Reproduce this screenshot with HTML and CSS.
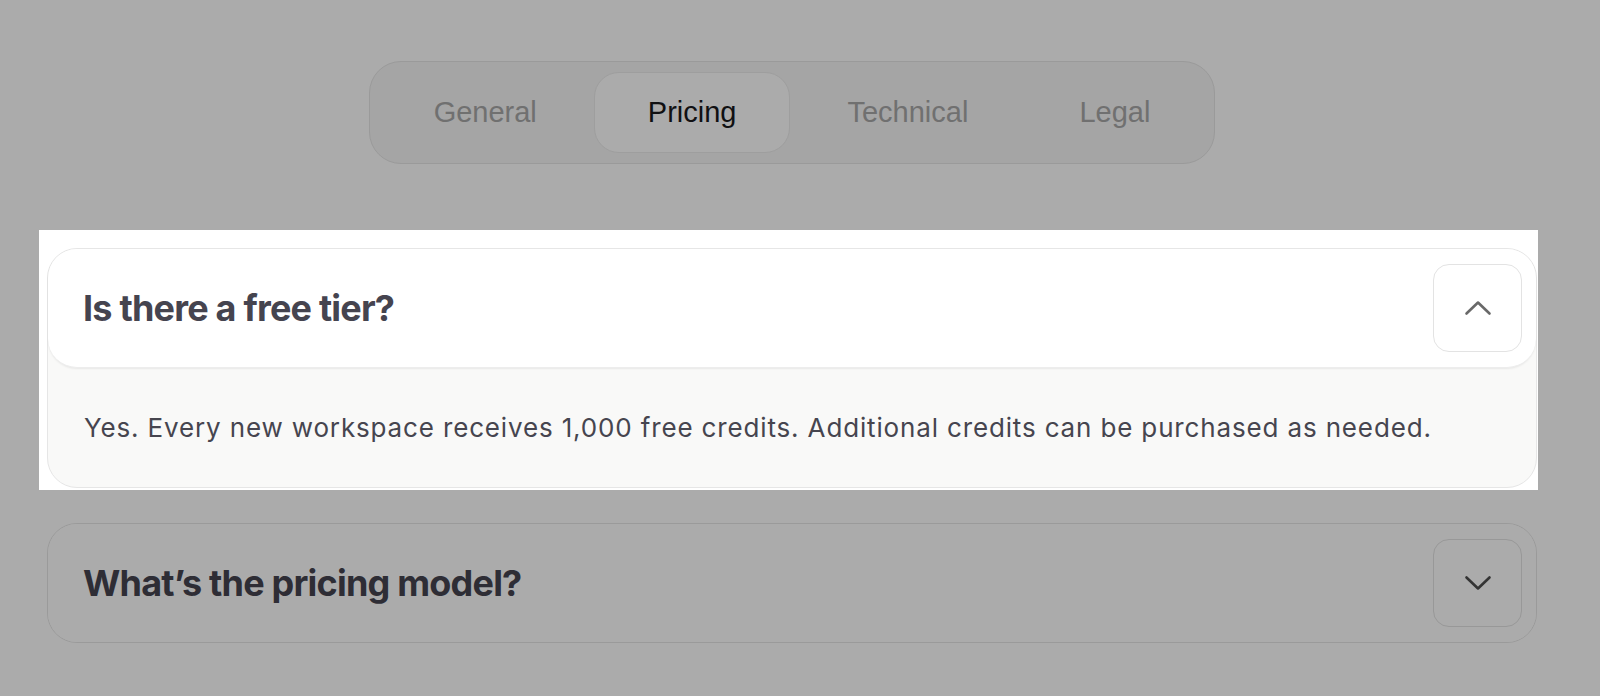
FILE: index.html
```html
<!DOCTYPE html>
<html lang="en">
<head>
<meta charset="utf-8">
<title>FAQ</title>
<link rel="stylesheet" href="styles.css">
</head>
<body>
<div class="page">
  <div class="tabs-row">
    <nav class="tabs">
      <button class="tab">General</button>
      <button class="tab active">Pricing</button>
      <button class="tab">Technical</button>
      <button class="tab">Legal</button>
    </nav>
  </div>

  <section class="faq">
    <div class="item open">
      <div class="item-head">
        <h3 class="q">Is there a free tier?</h3>
        <button class="toggle" aria-label="Collapse">
          <svg width="28" height="16" viewBox="0 0 28 16"><polyline points="2.5,13.5 14,2.5 25.5,13.5" fill="none" stroke="#696969" stroke-width="2.6" stroke-linecap="round" stroke-linejoin="round"/></svg>
        </button>
      </div>
      <div class="item-body">
        <p class="a">Yes. Every new workspace receives 1,000 free credits. Additional credits can be purchased as needed.</p>
      </div>
    </div>

    <div class="item">
      <div class="item-head">
        <h3 class="q">What’s the pricing model?</h3>
        <button class="toggle" aria-label="Expand">
          <svg width="28" height="16" viewBox="0 0 28 16"><polyline points="2.5,2.5 14,13.5 25.5,2.5" fill="none" stroke="#4e4e4e" stroke-width="2.6" stroke-linecap="round" stroke-linejoin="round"/></svg>
        </button>
      </div>
    </div>
  </section>
</div>
<div class="spotlight"></div>
</body>
</html>
```
FILE: styles.css
```css
* { box-sizing: border-box; }
html, body { margin: 0; padding: 0; }
body {
  background: #ffffff;
  font-family: Inter, "Liberation Sans", sans-serif;
  width: 1600px;
  height: 696px;
  overflow: hidden;
  position: relative;
}
.page {
  padding: 61px 63px 0 47px;
}
.tabs-row {
  display: flex;
  justify-content: center;
}
.tabs {
  display: flex;
  gap: 3px;
  padding: 10px;
  border: 1px solid #e6e6e6;
  background: #f6f6f6;
  border-radius: 32px;
}
.tab {
  font-family: "Liberation Sans", Arial, sans-serif;
  font-size: 29px;
  line-height: 33px;
  padding: 23px 53px;
  border: 1px solid transparent;
  border-radius: 25px;
  background: transparent;
  color: #a8a8a8;
  cursor: pointer;
}
.tab.active {
  background: #ffffff;
  border-color: #ececec;
  color: #18181b;
}
.faq {
  margin-top: 84px;
  display: flex;
  flex-direction: column;
  gap: 35px;
}
.item {
  border: 1px solid #e6e6e6;
  border-radius: 30px;
  background: #ffffff;
}
.item.open {
  background: #f9f9f8;
}
.item-head {
  display: flex;
  align-items: center;
  justify-content: space-between;
  padding: 15px 14px 15px 35px;
  background: #ffffff;
  border-radius: 29px;
}
.item.open .item-head {
  box-shadow: 0 1px 2px rgba(0, 0, 0, 0.07);
  border-bottom: 1px solid #ededed;
}
.q {
  margin: 0;
  font-size: 36px;
  font-weight: 700;
  letter-spacing: -0.022em;
  color: #45444f;
}
.toggle {
  width: 89px;
  height: 88px;
  border: 1px solid #e3e3e3;
  border-radius: 16px;
  background: #ffffff;
  display: flex;
  align-items: center;
  justify-content: center;
  padding: 0;
}
.item-body {
  padding: 40px 36px 39px 36px;
}
.a {
  margin: 0;
  font-size: 26px;
  line-height: 40px;
  letter-spacing: 0.85px;
  color: #46454f;
}
.spotlight {
  position: absolute;
  left: 39px;
  top: 230px;
  width: 1499px;
  height: 260px;
  box-shadow: 0 0 0 3000px rgba(0, 0, 0, 0.33);
  pointer-events: none;
}
```
